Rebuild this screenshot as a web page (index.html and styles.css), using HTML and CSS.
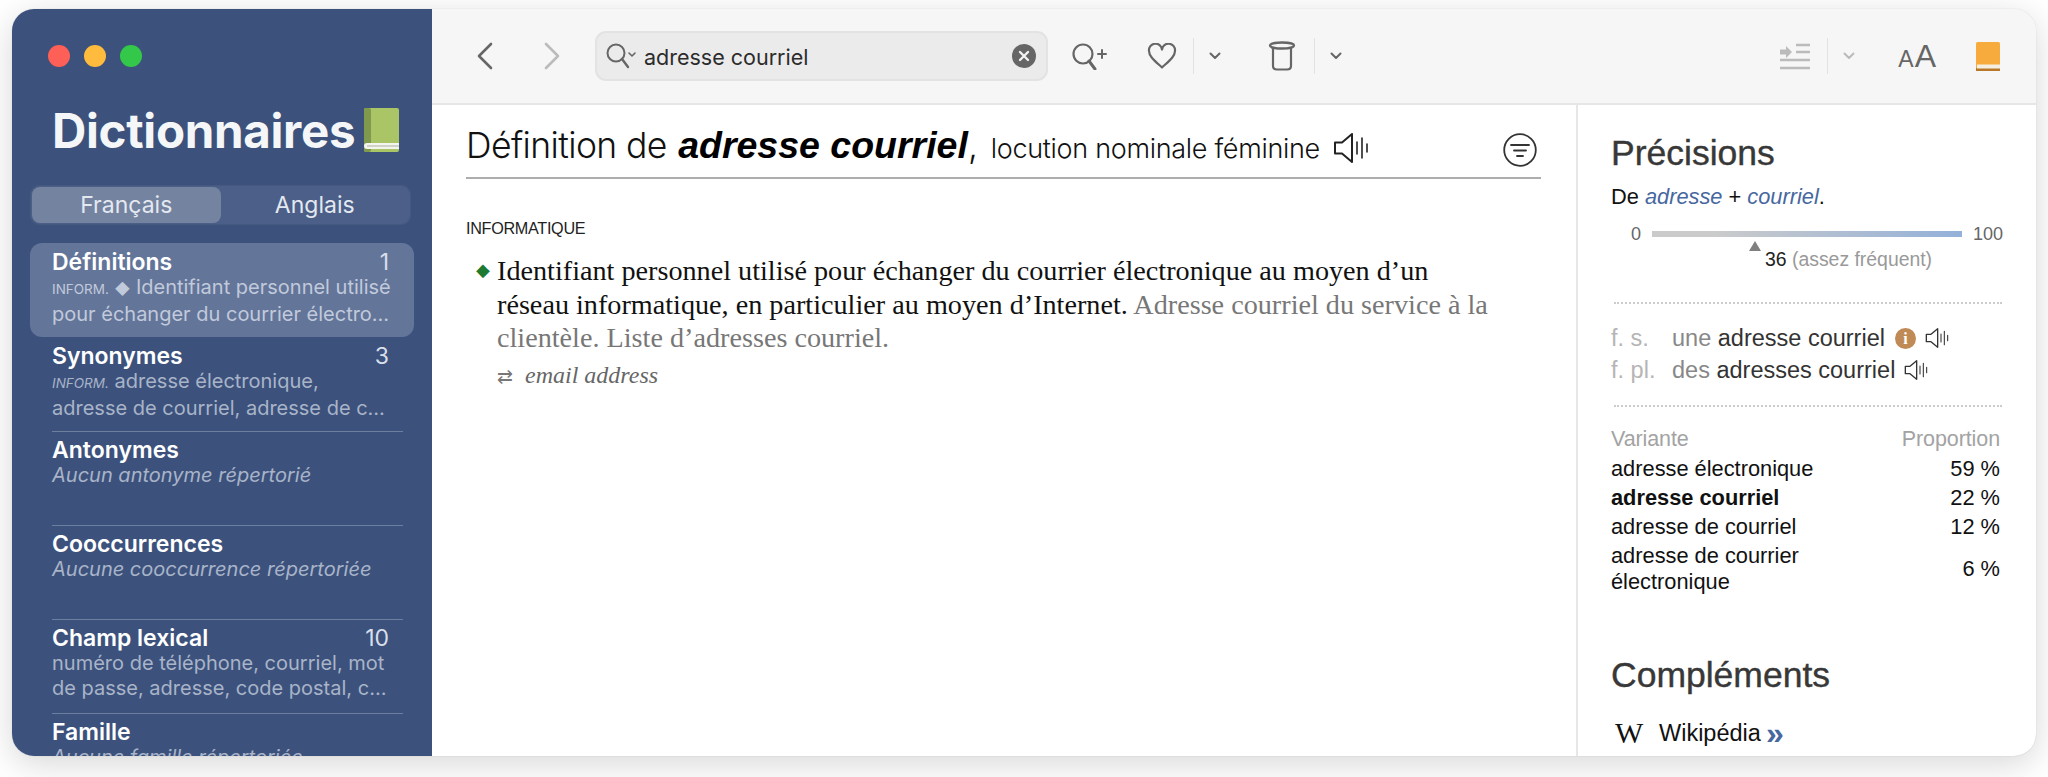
FILE: index.html
```html
<!DOCTYPE html>
<html lang="fr">
<head>
  <meta charset="UTF-8" />
  <title>Dictionnaires</title>
  <link rel="stylesheet" href="styles.css">
</head>
<body>
  <svg class="defs" width="0" height="0">
    <symbol id="speaker" viewBox="0 0 36 32">
      <path d="M2 10.5h7L19 2v28L9 21.5H2z" fill="none" stroke="currentColor" stroke-width="2" stroke-linejoin="round"/>
      <path d="M24 10v12M29 6v20M34 12v8" fill="none" stroke="currentColor" stroke-width="1.6" stroke-linecap="round"/>
    </symbol>
    <symbol id="chev" viewBox="0 0 12 8">
      <path d="M1.5 1.5 6 6l4.5-4.5" fill="none" stroke="currentColor" stroke-width="2" stroke-linecap="round" stroke-linejoin="round"/>
    </symbol>
  </svg>

  <div class="window">
    <aside class="sidebar">
      <div class="lights"><i class="red"></i><i class="yellow"></i><i class="green"></i></div>
      <h1 class="app-title">Dictionnaires
        <svg class="title-book" viewBox="0 0 35 44">
          <rect width="35" height="44" rx="2" fill="#aac565"/>
          <rect width="7" height="44" rx="2" fill="#7f9a4c"/>
          <path d="M3 35h32v6H3a3 3 0 0 1 0-6z" fill="#f4f4f0"/>
          <path d="M3 38h32" stroke="#a9b39a" stroke-width="1"/>
        </svg>
      </h1>
      <div class="segment">
        <div class="seg seg-on">Français</div>
        <div class="seg">Anglais</div>
      </div>
      <ul class="sections">
        <li class="section active">
          <div class="sec-head"><b>Définitions</b><span>1</span></div>
          <p><small>INFORM.</small> <span class="lozenge">◆</span> Identifiant personnel utilisé</p>
          <p>pour échanger du courrier électro…</p>
        </li>
        <li class="section nosep">
          <div class="sec-head"><b>Synonymes</b><span>3</span></div>
          <p><small><em>INFORM.</em></small> adresse électronique,</p>
          <p>adresse de courriel, adresse de c…</p>
        </li>
        <li class="section">
          <div class="sec-head"><b>Antonymes</b></div>
          <p><em>Aucun antonyme répertorié</em></p>
        </li>
        <li class="section">
          <div class="sec-head"><b>Cooccurrences</b></div>
          <p><em>Aucune cooccurrence répertoriée</em></p>
        </li>
        <li class="section">
          <div class="sec-head"><b>Champ lexical</b><span>10</span></div>
          <p>numéro de téléphone, courriel, mot</p>
          <p>de passe, adresse, code postal, c…</p>
        </li>
        <li class="section">
          <div class="sec-head"><b>Famille</b></div>
          <p><em>Aucune famille répertoriée</em></p>
        </li>
      </ul>
    </aside>

    <div class="main">
      <header class="toolbar">
        <svg class="tb-nav" viewBox="0 0 16 28"><path d="M14 2 2 14l12 12" fill="none" stroke="#666" stroke-width="2.6" stroke-linecap="round" stroke-linejoin="round"/></svg>
        <svg class="tb-nav fwd" viewBox="0 0 16 28"><path d="M2 2l12 12L2 26" fill="none" stroke="#bbb" stroke-width="2.6" stroke-linecap="round" stroke-linejoin="round"/></svg>
        <div class="search">
          <svg class="search-ico" viewBox="0 0 32 28">
            <circle cx="11" cy="11" r="8.5" fill="none" stroke="#666" stroke-width="2"/>
            <path d="M17 17l6 8" stroke="#666" stroke-width="2.4" stroke-linecap="round"/>
            <path d="M24 11l3 3 3-3" fill="none" stroke="#666" stroke-width="1.6" stroke-linecap="round" stroke-linejoin="round"/>
          </svg>
          <span class="search-text">adresse courriel</span>
          <svg class="search-clear" viewBox="0 0 24 24">
            <circle cx="12" cy="12" r="12" fill="#666"/>
            <path d="M8 8l8 8M16 8l-8 8" stroke="#f2f2f2" stroke-width="2.4" stroke-linecap="round"/>
          </svg>
        </div>
        <svg class="tb-zoom" viewBox="0 0 36 28">
          <circle cx="12" cy="12" r="9.5" fill="none" stroke="#666" stroke-width="2.2"/>
          <path d="M18 19l6 8" stroke="#666" stroke-width="3" stroke-linecap="round"/>
          <path d="M27 12h8M31 8v8" stroke="#666" stroke-width="2" stroke-linecap="round"/>
        </svg>
        <svg class="tb-heart" viewBox="0 0 30 26"><path d="M15 24.5C8 18 2 13.500 2 8a6.500 6.500 0 0 1 13-1.500A6.500 6.500 0 0 1 28 8c0 5.500-6 10-13 16.500z" fill="none" stroke="#666" stroke-width="2.200" stroke-linejoin="round"/></svg>
        <i class="tb-sep"></i>
        <svg class="tb-chev"><use href="#chev"/></svg>
        <svg class="tb-pot" viewBox="0 0 28 30">
          <ellipse cx="14" cy="4.500" rx="12" ry="3" fill="none" stroke="#666" stroke-width="2.400"/>
          <path d="M5 7v18c0 2.500 2 3.500 4 3.500h10c2 0 4-1 4-3.500V7" fill="none" stroke="#666" stroke-width="2.200"/>
        </svg>
        <i class="tb-sep"></i>
        <svg class="tb-chev"><use href="#chev"/></svg>
        <div class="tb-space"></div>
        <svg class="tb-indent" viewBox="0 0 32 28">
          <path d="M1 9.500h6V6l6 6-6 6v-3.500H1z" fill="#bbb" transform="translate(0 -2)"/>
          <path d="M17 3h14M17 10h14M1 18h30M1 26h30" stroke="#bbb" stroke-width="2.400"/>
        </svg>
        <i class="tb-sep"></i>
        <svg class="tb-chev off"><use href="#chev"/></svg>
        <div class="tb-aa"><span class="aa-s">A</span><span class="aa-l">A</span></div>
        <svg class="tb-book" viewBox="0 0 24 29">
          <rect width="24" height="29" rx="1.500" fill="#f7ab3c"/>
          <rect y="26" width="24" height="3" fill="#b9772a"/>
          <rect x="1" y="22.500" width="23" height="4" fill="#f5efe2"/>
        </svg>
      </header>

      <div class="panes">
        <main class="entry">
          <div class="entry-head">
            <h2>Définition de <strong>adresse courriel</strong><span class="comma">,</span> <span class="pos">locution nominale féminine</span></h2>
            <svg class="head-speaker"><use href="#speaker"/></svg>
            <svg class="head-filter" viewBox="0 0 34 34">
              <circle cx="17" cy="17" r="15.800" fill="none" stroke="#333" stroke-width="1.800"/>
              <path d="M8 12h18M11 17.500h12M14 23h6" stroke="#333" stroke-width="1.800" stroke-linecap="round"/>
            </svg>
          </div>
          <div class="domain">INFORMATIQUE</div>
          <div class="sense">
            <span class="mark">◆</span>
            <div class="sense-body">
              <p>Identifiant personnel utilisé pour échanger du courrier électronique au moyen d’un réseau informatique, en particulier au moyen d’Internet. <span class="example">Adresse courriel du service à la clientèle. Liste d’adresses courriel.</span></p>
              <p class="trans"><span class="arrows">⇄</span><em>email address</em></p>
            </div>
          </div>
        </main>

        <aside class="details">
          <h3>Précisions</h3>
          <p class="origin">De <em>adresse</em> + <em>courriel</em>.</p>
          <div class="freq">
            <span>0</span><div class="freq-bar"></div><span>100</span>
          </div>
          <div class="freq-note"><i class="freq-mark"></i><span><b>36</b> (assez fréquent)</span></div>
          <div class="forms">
            <div class="form"><span class="form-k">f. s.</span><span class="art">une</span> adresse courriel<i class="info">i</i><svg class="form-speaker"><use href="#speaker"/></svg></div>
            <div class="form"><span class="form-k">f. pl.</span><span class="art">des</span> adresses courriel<svg class="form-speaker"><use href="#speaker"/></svg></div>
          </div>
          <table class="variants">
            <tr><th>Variante</th><th>Proportion</th></tr>
            <tr><td>adresse électronique</td><td>59 %</td></tr>
            <tr class="cur"><td>adresse courriel</td><td>22 %</td></tr>
            <tr><td>adresse de courriel</td><td>12 %</td></tr>
            <tr class="two"><td>adresse de courrier<br>électronique</td><td>6 %</td></tr>
          </table>
          <h3 class="more">Compléments</h3>
          <div class="wiki"><span class="wiki-w">W</span>Wikipédia <span class="wiki-go">»</span></div>
        </aside>
      </div>
    </div>
  </div>
</body>
</html>
```

FILE: styles.css
```css
* {
  box-sizing: border-box;
}
html, body {
  height: 100%;
}
body {
  margin: 0;
  padding: 9px 12px 21px;
  overflow: hidden;
  background: #fff;
  font-family: "Liberation Sans", Arial, sans-serif;
}
.defs {
  position: absolute;
}
.window {
  display: flex;
  height: 747px;
  border-radius: 22px;
  overflow: hidden;
  background: #fff;
  box-shadow: 0 8px 34px rgba(0, 0, 0, 0.16), 0 0 1px rgba(0, 0, 0, 0.25);
}

/* sidebar */
.sidebar {
  flex: 0 0 420px;
  background: #3c527c;
  color: #fff;
  font-family: Inter, sans-serif;
  overflow: hidden;
}
.lights {
  display: flex;
  gap: 14px;
  padding: 36px 0 0 36px;
}
.lights i {
  width: 22px;
  height: 22px;
  border-radius: 50%;
}
.lights .red { background: #fe5f57; }
.lights .yellow { background: #febb3e; }
.lights .green { background: #34c84a; }
.app-title {
  display: flex;
  align-items: center;
  gap: 9px;
  margin: 37px 0 0 40px;
  height: 52px;
  font-size: 47.5px;
  font-weight: 700;
  letter-spacing: -0.3px;
  color: #f5f6f8;
}
.title-book {
  width: 35px;
  height: 44px;
}
.segment {
  display: flex;
  margin: 29px 0 0 18px;
  width: 381px;
  height: 40px;
  padding: 2px;
  border-radius: 10px;
  background: #4b5f88;
  box-shadow: inset 0 0 0 1px #45597f;
}
.seg {
  flex: 1;
  display: flex;
  align-items: center;
  justify-content: center;
  font-size: 23px;
  color: #e4e8f0;
  border-radius: 8px;
}
.seg-on {
  background: #74839f;
}
.sections {
  list-style: none;
  margin: 18px 0 0 18px;
  padding: 0;
  width: 384px;
}
.section {
  position: relative;
  height: 94px;
  padding: 6px 25px 0 22px;
}
.section + .section:not(.nosep)::before {
  content: "";
  position: absolute;
  left: 22px;
  right: 11px;
  top: 0;
  height: 1px;
  background: #6d7f9f;
}
.active {
  background: #64759a;
  border-radius: 12px;
}
.sec-head {
  display: flex;
  justify-content: space-between;
  font-size: 23px;
  line-height: 26px;
}
.sec-head b {
  font-weight: 600;
}
.sec-head span {
  color: #d8deea;
}
.section p {
  margin: 0;
  font-size: 20px;
  line-height: 25px;
  color: #a9b4c9;
  white-space: nowrap;
}
.active p {
  color: #c1cadb;
}
.section small {
  font-size: 13.500px;
}
.lozenge {
  font-size: 15px;
}

/* toolbar */
.main {
  flex: 1;
  display: flex;
  flex-direction: column;
  min-width: 0;
}
.toolbar {
  flex: 0 0 96px;
  display: flex;
  align-items: center;
  padding: 0 36px 0 45px;
  background: #f6f6f6;
  border-bottom: 2px solid #e6e6e6;
  color: #666;
}
.tb-nav {
  width: 16px;
  height: 28px;
}
.tb-nav.fwd {
  margin-left: 51px;
}
.search {
  display: flex;
  align-items: center;
  width: 453px;
  height: 50px;
  margin-left: 35px;
  padding: 0 10px 0 8px;
  border: 2px solid #e3e3e3;
  border-radius: 11px;
  background: #ebebeb;
  font-family: Inter, sans-serif;
  font-size: 21.5px;
  color: #2b2b2b;
}
.search-ico {
  width: 32px;
  height: 28px;
}
.search-text {
  flex: 1;
  margin: 2px 0 0 7px;
}
.search-clear {
  width: 24px;
  height: 24px;
}
.tb-zoom {
  width: 36px;
  height: 28px;
  margin-left: 23px;
}
.tb-heart {
  width: 30px;
  height: 26px;
  margin-left: 40px;
}
.tb-sep {
  width: 1px;
  height: 36px;
  margin-left: 16px;
  background: #e2e2e2;
}
.tb-chev {
  width: 12px;
  height: 8px;
  margin-left: 15px;
  color: #666;
}
.tb-chev.off {
  color: #bbb;
}
.tb-pot {
  width: 28px;
  height: 30px;
  margin: 0 2px 0 47px;
}
.tb-space {
  flex: 1;
}
.tb-indent {
  width: 32px;
  height: 28px;
}
.tb-aa {
  display: flex;
  align-items: baseline;
  margin-left: 43px;
  color: #666;
}
.aa-s { font-size: 23px; }
.aa-l { font-size: 32px; margin-left: 1px; }
.tb-book {
  width: 24px;
  height: 29px;
  margin-left: 40px;
}

/* panes */
.panes {
  flex: 1;
  display: flex;
  min-height: 0;
}
.entry {
  flex: 1;
  padding: 0 35px 0 34px;
  min-width: 0;
}
.entry-head {
  display: flex;
  align-items: center;
  height: 74px;
  border-bottom: 2px solid #adadad;
  padding-top: 9px;
}
.entry-head h2 {
  margin: 0;
  font-family: Inter, sans-serif;
  font-weight: 300;
  font-size: 35.5px;
  letter-spacing: -0.6px;
  color: #111;
  white-space: nowrap;
}
.entry-head strong {
  margin-left: 2px;
  font-family: "Liberation Sans", sans-serif;
  font-style: italic;
  font-weight: 700;
  font-size: 37.5px;
  letter-spacing: 0;
  color: #000;
}
.comma {
  margin-right: 4px;
}
.pos {
  font-size: 27px;
  letter-spacing: -0.3px;
}
.head-speaker {
  width: 36px;
  height: 32px;
  margin: 4px 0 0 13px;
  color: #222;
}
.head-filter {
  width: 34px;
  height: 34px;
  margin: 8px 4px 0 auto;
}
.domain {
  margin-top: 39px;
  font-size: 16.2px;
  letter-spacing: -0.3px;
  line-height: 20px;
  color: #222;
}
.sense {
  display: flex;
  margin-top: 16px;
  padding-left: 10px;
  font-family: "Liberation Serif", serif;
  font-size: 28.2px;
  line-height: 33.500px;
  color: #111;
}
.mark {
  flex: 0 0 21px;
  font-size: 18px;
  color: #1e7a30;
}
.sense-body {
  max-width: 1000px;
}
.sense-body p {
  margin: 0;
}
.example {
  color: #777;
}
.trans {
  margin-top: 4px !important;
  color: #666;
  font-size: 24px;
}
.arrows {
  font-size: 19px;
  margin: 0 12px 0 0;
  color: #777;
}

/* right pane */
.details {
  flex: 0 0 460px;
  padding: 0 36px 0 33px;
  border-left: 2px solid #e7e7e7;
  font-size: 21.800px;
  overflow: hidden;
}
.details h3 {
  margin: 27px 0 0;
  font-size: 35.5px;
  line-height: 42px;
  font-weight: 400;
  color: #383838;
  -webkit-text-stroke: 0.4px #383838;
}
.origin {
  margin: 11px 0 0;
  line-height: 24px;
  color: #111;
}
.origin em {
  color: #47689f;
}
.freq {
  display: flex;
  align-items: center;
  gap: 11px;
  margin: 15px 0 0 20px;
  width: 372px;
  font-size: 18px;
  line-height: 20px;
  color: #666;
}
.freq-bar {
  flex: 1;
  height: 6px;
  background: linear-gradient(to right, #cbcbcb, #cbcbcb 20%, #93b1d9);
}
.freq-note {
  position: relative;
  margin: 3px 0 0 154px;
  font-size: 19.4px;
  line-height: 24px;
  color: #999;
}
.freq-note b {
  font-weight: 400;
  color: #222;
}
.freq-mark {
  position: absolute;
  left: -16px;
  top: -6px;
  border: 6px solid transparent;
  border-top: 0;
  border-bottom: 10px solid #808080;
}
.forms {
  margin: 31px 0 0 3px;
  width: 388px;
  padding: 18px 0 19px;
  border-top: 2px dotted #ccc;
  border-bottom: 2px dotted #ccc;
}
.form {
  display: flex;
  align-items: center;
  height: 32px;
  margin-left: -3px;
  font-size: 23.5px;
  color: #333;
  white-space: pre;
}
.form-k {
  width: 61px;
  color: #b5b5b5;
}
.art {
  color: #888;
}
.info {
  width: 21px;
  height: 21px;
  margin-left: 10px;
  border-radius: 50%;
  background: #bf8a55;
  color: #fff;
  font-family: "Liberation Serif", serif;
  font-weight: 700;
  font-style: normal;
  font-size: 16px;
  line-height: 21px;
  text-align: center;
}
.form-speaker {
  width: 24px;
  height: 22px;
  margin-left: 9px;
  color: #333;
}
.variants {
  width: 389px;
  margin-top: 18px;
  border-collapse: collapse;
  font-size: 21.800px;
  color: #111;
}
.variants th {
  height: 29px;
  padding: 0;
  font-weight: 400;
  font-size: 21.5px;
  letter-spacing: -0.1px;
  text-align: left;
  color: #a3a3a3;
}
.variants td {
  padding: 3px 0;
  line-height: 23px;
}
.variants .two td {
  padding: 2px 0 0;
  line-height: 26px;
}
.variants th:last-child,
.variants td:last-child {
  text-align: right;
}
.variants .cur td:first-child {
  font-weight: 700;
}
.details h3.more {
  margin-top: 59px;
}
.wiki {
  display: flex;
  align-items: center;
  height: 32px;
  margin-top: 21px;
  font-size: 23.5px;
  color: #111;
}
.wiki-w {
  width: 48px;
  padding-left: 4px;
  font-family: "Liberation Serif", serif;
  font-size: 30px;
}
.wiki-go {
  margin-left: 5px;
  color: #47689f;
  font-weight: 700;
  font-size: 32px;
  line-height: 20px;
}
```
